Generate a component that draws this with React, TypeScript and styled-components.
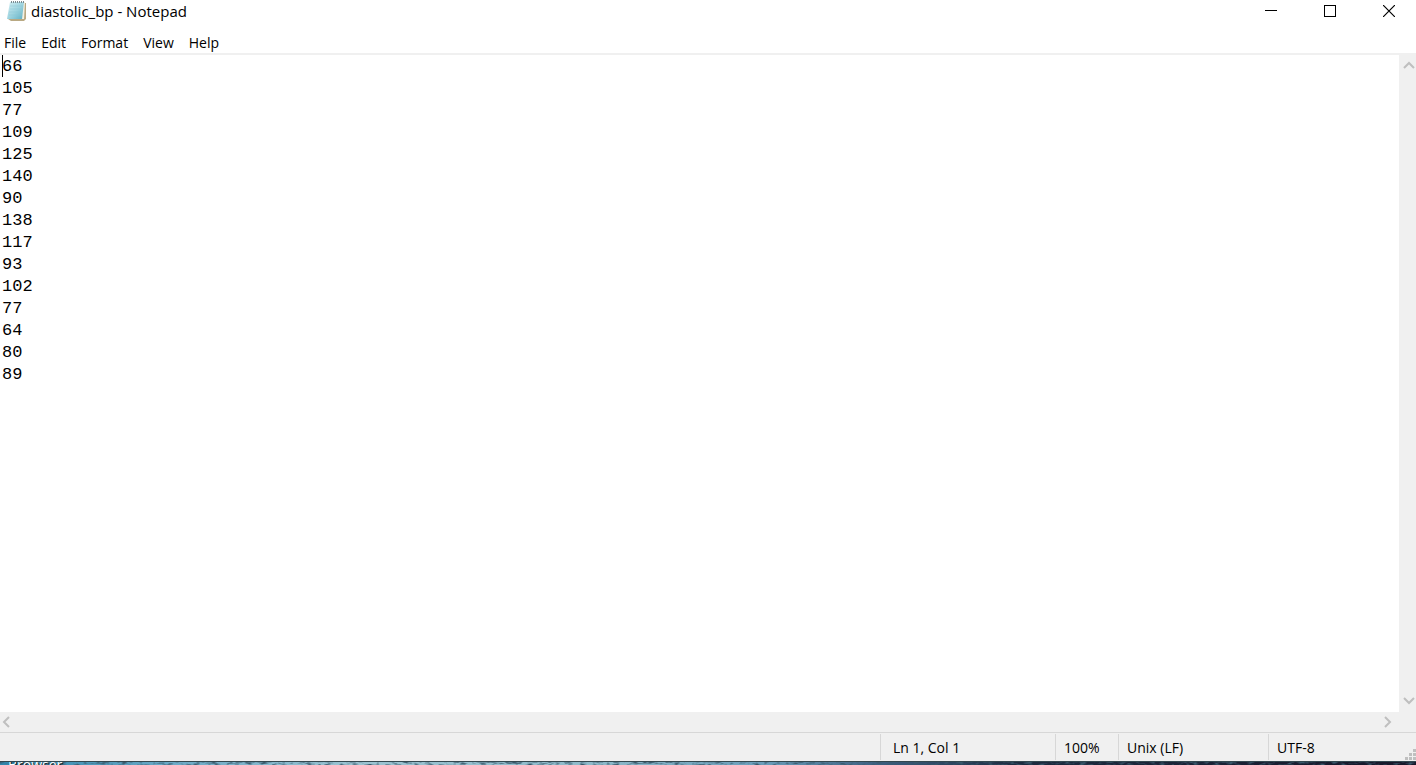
import React from "react";
import styled, { createGlobalStyle } from "styled-components";

const Global = createGlobalStyle`
  * { box-sizing: border-box; }
  body { margin: 0; background: #fff; color: #000; font-family: "Open Sans", "Noto Sans", sans-serif; font-size: 14px; }
  button { font: inherit; color: inherit; border: 0; background: none; padding: 0; }
`;

const Window = styled.div`
  display: flex;
  flex-direction: column;
  height: 100vh;
  min-height: 300px;
`;

const TitleBar = styled.header`
  display: flex;
  align-items: flex-start;
  gap: 5px;
  height: 24px;
  padding-left: 6px;
`;

const Title = styled.h1`
  flex: 1;
  margin: 0;
  font-size: 15px;
  font-weight: 400;
  line-height: 22px;
`;

const WindowButton = styled.button`
  display: flex;
  align-items: center;
  justify-content: center;
  width: 54px;
  height: 22px;
`;

const MenuBar = styled.nav`
  display: flex;
  gap: 15px;
  height: 29px;
  padding: 9px 4px 0;
`;

const MenuItem = styled.button`
  height: 20px;
  line-height: 20px;
`;

const Editor = styled.main`
  flex: 1;
  min-height: 0;
  display: grid;
  grid-template-columns: minmax(0, 1fr) 17px;
  grid-template-rows: minmax(0, 1fr) 20px;
  border-top: 2px solid #f0f0f0;
  background: #f0f0f0;
`;

const Page = styled.div`
  position: relative;
  display: flex;
  background: #fff;
`;

const Text = styled.textarea`
  flex: 1;
  border: 0;
  outline: 0;
  resize: none;
  overflow: hidden;
  margin: 0;
  padding: 1px 2px 0;
  background: transparent;
  color: #000;
  caret-color: transparent;
  font: 17px/22px "Liberation Mono", monospace;
`;

const Caret = styled.span`
  position: absolute;
  left: 2px;
  top: 0;
  width: 1px;
  height: 22px;
  background: #000;
`;

const Scrollbar = styled.div<{ $horizontal?: boolean }>`
  display: flex;
  flex-direction: ${(p) => (p.$horizontal ? "row" : "column")};
  justify-content: space-between;
  align-items: center;
  padding: ${(p) => (p.$horizontal ? "0 4px 0 0" : "4px 0 4px 2px")};
`;

const ScrollButton = styled.button`
  display: flex;
  align-items: center;
  justify-content: center;
  width: 14px;
  height: 14px;
`;

const StatusBar = styled.footer`
  position: relative;
  display: flex;
  justify-content: flex-end;
  height: 29px;
  padding: 1px 0;
  border-top: 1px solid #d7d7d7;
  background: #f0f0f0;
`;

const StatusCell = styled.div<{ $width: number; $indent?: number }>`
  width: ${(p) => p.$width}px;
  padding-left: ${(p) => p.$indent ?? 8}px;
  border-left: 1px solid #d7d7d7;
  line-height: 27px;
  white-space: nowrap;
`;

const Grip = styled.svg`
  position: absolute;
  right: 0;
  bottom: 1px;
`;

const Desktop = styled.div`
  height: 4px;
  overflow: hidden;
  border-top: 1px solid #33474f;
  background: linear-gradient(90deg, #2f86ad 0, #6aa9c6 12%, #9cc4d2 25%, #8ebaca 42%, #6a9dba 54%, #3d5f80 62%, #1d2b40 72%, #17172a 100%);
  position: relative;
`;

const Texture = styled.svg`
  position: absolute;
  inset: 0;
  width: 100%;
  height: 100%;
`;

const DesktopLabel = styled.span`
  position: absolute;
  left: 8px;
  top: -4px;
  color: #fff;
  font-size: 14px;
  line-height: 14px;
  text-shadow: 1px 1px 1px #000;
`;

const chevrons = {
  up: "M2 9 L7 4 L12 9",
  down: "M2 4 L7 9 L12 4",
  left: "M9 2 L4 7 L9 12",
  right: "M4 2 L9 7 L4 12",
};

function Chevron({ direction }: { direction: keyof typeof chevrons }) {
  return (
    <ScrollButton aria-label={`Scroll ${direction}`}>
      <svg width="14" height="14" viewBox="0 0 14 14" fill="none" stroke="#bfbfbf" strokeWidth="2">
        <path d={chevrons[direction]} />
      </svg>
    </ScrollButton>
  );
}

function NotepadIcon() {
  return (
    <svg width="20" height="22" viewBox="0 0 20 22" aria-hidden="true">
      <defs>
        <linearGradient id="cover" x1="0" y1="0" x2="1" y2="1">
          <stop offset="0" stopColor="#d3eef3" />
          <stop offset="0.5" stopColor="#a0d5e0" />
          <stop offset="1" stopColor="#5fb0c4" />
        </linearGradient>
      </defs>
      <path d="M6 3 H20 V19 L18 21 H5 L2 19 Z" fill="#b9a983" />
      <path d="M5 2 H19 L18 19 H3 Z" fill="#f4f0e2" />
      <path d="M4 2 H18 L16 19 H1 Z" fill="url(#cover)" />
      <path d="M4 6 H17 M4 9 H17 M3 12 H16 M3 15 H16" stroke="#8ac6d4" strokeWidth="1" opacity="0.5" />
      <path d="M5.5 1 V3 M7.5 1 V3 M9.5 1 V3 M11.5 1 V3 M13.5 1 V3 M15.5 1 V3 M17.5 1 V3" stroke="#7c8c92" strokeWidth="1" />
    </svg>
  );
}

const values = [66, 105, 77, 109, 125, 140, 90, 138, 117, 93, 102, 77, 64, 80, 89];
const menus = ["File", "Edit", "Format", "View", "Help"];
const gripDots = [[8, 0], [4, 4], [8, 4], [0, 8], [4, 8], [8, 8]];

export default function App() {
  return (
    <Window>
      <Global />
      <TitleBar>
        <NotepadIcon />
        <Title>diastolic_bp - Notepad</Title>
        <WindowButton aria-label="Minimize">
          <svg width="12" height="12" shapeRendering="crispEdges"><path d="M0 5.5 H12" stroke="#000" /></svg>
        </WindowButton>
        <WindowButton aria-label="Maximize">
          <svg width="12" height="12" shapeRendering="crispEdges"><rect x="0.5" y="0.5" width="11" height="11" fill="none" stroke="#000" /></svg>
        </WindowButton>
        <WindowButton aria-label="Close">
          <svg width="12" height="12"><path d="M0 0 L12 12 M12 0 L0 12" stroke="#000" strokeWidth="1.2" /></svg>
        </WindowButton>
      </TitleBar>
      <MenuBar>
        {menus.map((m) => <MenuItem key={m}>{m}</MenuItem>)}
      </MenuBar>
      <Editor>
        <Page>
          <Text aria-label="Text editor" spellCheck={false} defaultValue={values.join("\n")} />
          <Caret />
        </Page>
        <Scrollbar><Chevron direction="up" /><Chevron direction="down" /></Scrollbar>
        <Scrollbar $horizontal><Chevron direction="left" /><Chevron direction="right" /></Scrollbar>
      </Editor>
      <StatusBar>
        <StatusCell $width={175} $indent={12}>Ln 1, Col 1</StatusCell>
        <StatusCell $width={63}>100%</StatusCell>
        <StatusCell $width={150}>Unix (LF)</StatusCell>
        <StatusCell $width={148}>UTF-8</StatusCell>
        <Grip width="11" height="11" shapeRendering="crispEdges" aria-hidden="true">
          {gripDots.map(([x, y]) => <rect key={`${x}-${y}`} x={x} y={y} width="3" height="3" fill="#bfbfbf" />)}
        </Grip>
      </StatusBar>
      <Desktop>
        <Texture aria-hidden="true">
          <filter id="grain" x="0" y="0" width="100%" height="100%">
            <feTurbulence type="fractalNoise" baseFrequency="0.15 0.4" numOctaves="2" seed="4" />
            <feColorMatrix values="0 0 0 0 0.04  0 0 0 0 0.1  0 0 0 0 0.15  3 0 0 0 -1.4" />
          </filter>
          <rect width="100%" height="100%" filter="url(#grain)" />
        </Texture>
        <DesktopLabel>Browser</DesktopLabel>
      </Desktop>
    </Window>
  );
}
